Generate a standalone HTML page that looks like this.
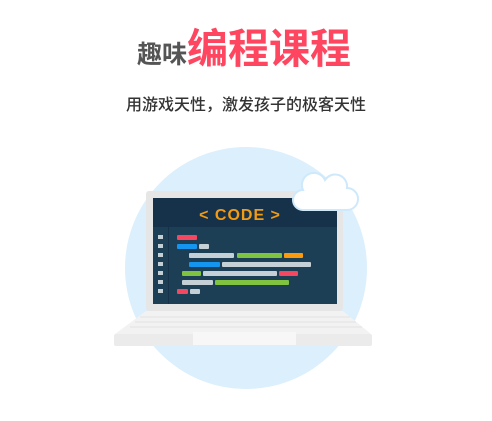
<!DOCTYPE html>
<html><head><meta charset="utf-8"><style>
body{margin:0;width:492px;height:421px;background:#fff;overflow:hidden;font-family:"Liberation Sans","Noto Sans CJK SC",sans-serif;position:relative}
.t{position:absolute;white-space:nowrap}
</style></head><body>
<div class="t" style="left:-2px;width:492px;top:22px;text-align:center;line-height:54px;font-weight:bold">
<span style="color:#555;font-size:25px">趣味</span><span style="color:#fe4660;font-size:41px">编程课程</span></div>
<div class="t" style="left:0;width:492px;top:91px;text-align:center;font-size:16px;color:#333;font-weight:500">用游戏天性，激发孩子的极客天性</div>
<svg width="492" height="421" style="position:absolute;left:0;top:0">
<circle cx="246" cy="268" r="121" fill="#dbeffc"/>
<rect x="146" y="191" width="197" height="120" rx="3" fill="#e6e6e6"/>
<rect x="153" y="198" width="184" height="106" fill="#1d3f55"/>
<rect x="153" y="198" width="184" height="29" fill="#16314a"/>
<rect x="168" y="227" width="1" height="77" fill="#16314a"/>
<text x="240" y="220" text-anchor="middle" font-family="Liberation Sans" font-weight="bold" font-size="16" letter-spacing="1" fill="#f39c12">&lt; CODE &gt;</text>
<g fill="#c4cfd6">
<rect x="158" y="235" width="5" height="4"/><rect x="158" y="244" width="5" height="4"/><rect x="158" y="253" width="5" height="4"/><rect x="158" y="262" width="5" height="4"/><rect x="158" y="271" width="5" height="4"/><rect x="158" y="280" width="5" height="4"/><rect x="158" y="289" width="5" height="4"/>
</g>
<g>
<rect x="177" y="235" width="20" height="5" rx="1" fill="#f5475f"/>
<rect x="177" y="244" width="20" height="5" rx="1" fill="#1496f0"/><rect x="199" y="244" width="10" height="5" rx="1" fill="#c4cfd6"/>
<rect x="189" y="253" width="45" height="5" rx="1" fill="#c4cfd6"/><rect x="237" y="253" width="45" height="5" rx="1" fill="#80c341"/><rect x="284" y="253" width="19" height="5" rx="1" fill="#f99b0c"/>
<rect x="189" y="262" width="31" height="5" rx="1" fill="#1496f0"/><rect x="222" y="262" width="89" height="5" rx="1" fill="#c4cfd6"/>
<rect x="182" y="271" width="19" height="5" rx="1" fill="#80c341"/><rect x="203" y="271" width="74" height="5" rx="1" fill="#c4cfd6"/><rect x="279" y="271" width="19" height="5" rx="1" fill="#f5475f"/>
<rect x="182" y="280" width="31" height="5" rx="1" fill="#c4cfd6"/><rect x="215" y="280" width="74" height="5" rx="1" fill="#80c341"/>
<rect x="177" y="289" width="11" height="5" rx="1" fill="#f5475f"/><rect x="190" y="289" width="10" height="5" rx="1" fill="#c4cfd6"/>
</g>
<path d="M146 311 L343 311 L371 334 L115 334 Z" fill="#f2f2f2"/>
<g stroke="#e2e2e2" stroke-width="1"><line x1="140" y1="317" x2="350" y2="317"/><line x1="135" y1="322" x2="356" y2="322"/><line x1="130" y1="327" x2="362" y2="327"/></g>
<rect x="114" y="334" width="258" height="12" rx="2" fill="#ebebeb"/>
<rect x="193" y="332" width="103" height="13" fill="#f7f7f7"/>
<g fill="#fff" stroke="#cde9fb" stroke-width="2">
<path d="M303 210 a10 10 0 0 1 0-20 a12 12 0 0 1 22-10 a12 12 0 0 1 22 8 a10 10 0 0 1 0 22 Z"/>
</g>
</svg>
</body></html>
